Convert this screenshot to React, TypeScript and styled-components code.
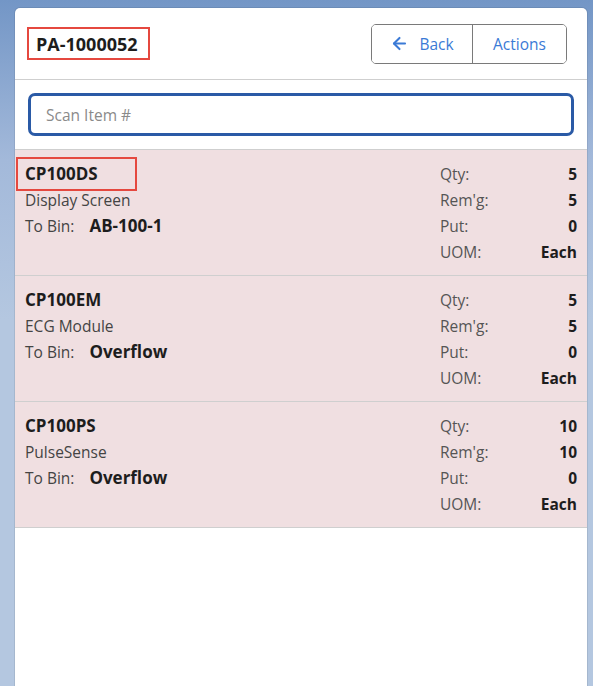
import React from 'react'
import styled, { createGlobalStyle } from 'styled-components'
import { ArrowLeft } from 'lucide-react'

const GlobalStyle = createGlobalStyle`
  html, body {
    margin: 0;
    height: 100%;
  }
  body {
    font-family: 'Open Sans', 'Noto Sans', sans-serif;
    background: linear-gradient(180deg, #7396c6 0px, #a3b9da 160px, #b4c7e0 320px, #b4c7e0 100%);
    color: #222;
    overflow: hidden;
  }
`

const Page = styled.div`
  padding: 8px 6px 0 15px;
  height: 100vh;
  box-sizing: border-box;
`

const Card = styled.div`
  width: 572px;
  height: 100%;
  background: #fff;
  border-radius: 5px 5px 0 0;
  box-shadow: 0 0 0 1px rgba(0, 0, 0, 0.08);
  display: flex;
  flex-direction: column;
`

const Header = styled.div`
  height: 71px;
  display: flex;
  align-items: center;
  justify-content: space-between;
  padding: 0 20px 0 16px;
  border-bottom: 1px solid #cfcfcf;
`

const Title = styled.h1`
  margin: 0;
  display: flex;
  align-items: center;
  height: 25px;
  width: 115px;
  box-sizing: border-box;
  font-size: 18px;
  font-weight: 700;
  padding: 0 0 0 5px;
  outline: 2px solid #e5483f;
  outline-offset: 2px;
  color: #1d1d1d;
`

const ButtonGroup = styled.div`
  display: flex;
  height: 38px;
  border: 1px solid #7a7a7a;
  border-radius: 5px;
  overflow: hidden;
`

const GroupButton = styled.button<{ $wide?: boolean }>`
  display: flex;
  align-items: center;
  justify-content: center;
  gap: 10px;
  width: ${(p) => (p.$wide ? '94px' : '100px')};
  border: 0;
  background: #fff;
  color: #3b7ad6;
  font-family: inherit;
  font-size: 15.5px;
  padding: 0;
  & + & {
    border-left: 1px solid #7a7a7a;
  }
`

const SearchBar = styled.div`
  padding: 13px;
  border-bottom: 1px solid #cfcfcf;
`

const SearchInput = styled.input`
  display: block;
  width: 100%;
  box-sizing: border-box;
  height: 43px;
  border: 3px solid #2a5aa6;
  border-radius: 7px;
  padding: 0 15px;
  font-family: inherit;
  font-size: 15.5px;
  color: #222;
  outline: none;
  caret-color: #111;
  &::placeholder {
    color: #8a8a8a;
  }
`

const List = styled.div`
  display: flex;
  flex-direction: column;
`

const Item = styled.div`
  display: flex;
  justify-content: space-between;
  background: #f0dfe1;
  padding: 11px 10px 10px 10px;
  border-bottom: 1px solid #cfcfcf;
  font-size: 15.5px;
  line-height: 26px;
`

const Info = styled.div`
  display: flex;
  flex-direction: column;
`

const Name = styled.div<{ $flagged?: boolean }>`
  align-self: flex-start;
  font-size: 17px;
  font-weight: 700;
  color: #1d1d1d;
  ${(p) =>
    p.$flagged &&
    `
    box-sizing: border-box;
    width: 113px;
    height: 26px;
    margin-left: -5px;
    padding-left: 5px;
    outline: 2px solid #e5483f;
    outline-offset: 2px;
  `}
`

const Desc = styled.div`
  color: #444;
`

const Bin = styled.div`
  color: #444;
  & > b {
    margin-left: 15px;
    font-size: 17px;
    color: #1d1d1d;
  }
`

const Stats = styled.div`
  display: grid;
  grid-template-columns: 1fr auto;
  width: 137px;
`

const StatLabel = styled.span`
  color: #555;
`

const StatValue = styled.span`
  font-weight: 700;
  text-align: right;
  color: #1d1d1d;
`

type PutItem = {
  sku: string
  name: string
  bin: string
  qty: number
  remaining: number
  put: number
  uom: string
  flagged?: boolean
}

const items: PutItem[] = [
  { sku: 'CP100DS', name: 'Display Screen', bin: 'AB-100-1', qty: 5, remaining: 5, put: 0, uom: 'Each', flagged: true },
  { sku: 'CP100EM', name: 'ECG Module', bin: 'Overflow', qty: 5, remaining: 5, put: 0, uom: 'Each' },
  { sku: 'CP100PS', name: 'PulseSense', bin: 'Overflow', qty: 10, remaining: 10, put: 0, uom: 'Each' },
]

const App = (): React.ReactElement => {
  return (
    <>
      <GlobalStyle />
      <Page>
        <Card>
          <Header>
            <Title>PA-1000052</Title>
            <ButtonGroup>
              <GroupButton>
                <ArrowLeft size={19} strokeWidth={2.6} />
                Back
              </GroupButton>
              <GroupButton $wide>Actions</GroupButton>
            </ButtonGroup>
          </Header>
          <SearchBar>
            <SearchInput placeholder="Scan Item #" autoFocus />
          </SearchBar>
          <List>
            {items.map((it) => (
              <Item key={it.sku}>
                <Info>
                  <Name $flagged={it.flagged}>{it.sku}</Name>
                  <Desc>{it.name}</Desc>
                  <Bin>
                    To Bin:<b>{it.bin}</b>
                  </Bin>
                </Info>
                <Stats>
                  <StatLabel>Qty:</StatLabel>
                  <StatValue>{it.qty}</StatValue>
                  <StatLabel>Rem'g:</StatLabel>
                  <StatValue>{it.remaining}</StatValue>
                  <StatLabel>Put:</StatLabel>
                  <StatValue>{it.put}</StatValue>
                  <StatLabel>UOM:</StatLabel>
                  <StatValue>{it.uom}</StatValue>
                </Stats>
              </Item>
            ))}
          </List>
        </Card>
      </Page>
    </>
  )
}

export default App
